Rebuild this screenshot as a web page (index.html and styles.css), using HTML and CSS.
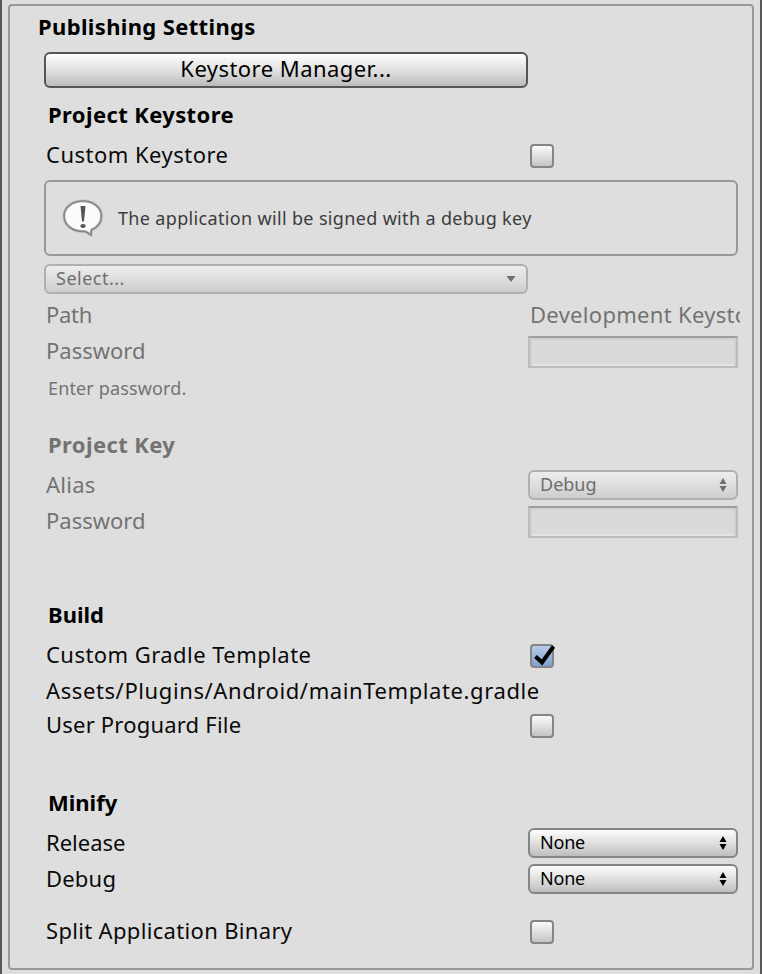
FILE: index.html
```html
<!DOCTYPE html>
<html lang="en">
<head>
<meta charset="utf-8">
<title>Publishing Settings</title>
<link rel="stylesheet" href="styles.css">
</head>
<body>
<main class="window">
  <section class="panel">
    <h1 class="title"><span class="t-publishing">Publishing Settings</span></h1>
    <button class="button"><span class="t-manager">Keystore Manager...</span></button>

    <h2 class="heading"><span class="t-keystore">Project Keystore</span></h2>
    <div class="row first"><span class="label"><span class="t-custom">Custom Keystore</span></span><span class="check"></span></div>
    <div class="help">
      <svg class="bubble" width="42" height="38" viewBox="0 0 42 38">
        <path d="M21 2C31.500 2 39.500 8.500 39.500 17C39.500 24 34.500 28.800 29.500 31L29 36L23.500 32.500C10 33 2 26 2 17C2 8.500 10 2 21 2Z" fill="#fbfbfb" stroke="#c2c2c2" stroke-width="3"/>
        <path d="M21 2C31.500 2 39.500 8.500 39.500 17C39.500 24 34.500 28.800 29.500 31L29 36L23.500 32.500C10 33 2 26 2 17C2 8.500 10 2 21 2Z" fill="none" stroke="#858585" stroke-width="1.500"/>
        <path d="M18.500 7H23.500L22 22.500H20Z" fill="#555"/>
        <ellipse cx="21" cy="27" rx="2.700" ry="2" fill="#555"/>
      </svg>
      <span class="t-help">The application will be signed with a debug key</span>
    </div>
    <div class="dropdown wide off"><span class="t-select">Select...</span><svg width="10" height="6" viewBox="0 0 10 6"><path d="M0.500 0H9.500L5 6Z" fill="currentColor"/></svg></div>
    <div class="row path dim"><span class="label"><span class="t-path">Path</span></span><span class="value"><span class="t-dev">Development Keystore</span></span></div>
    <div class="row field-row dim"><span class="label"><span class="t-password">Password</span></span><span class="field"></span></div>
    <p class="note dim"><span class="t-enter">Enter password.</span></p>

    <h2 class="heading key dim"><span class="t-key">Project Key</span></h2>
    <div class="row first dim"><span class="label"><span class="t-alias">Alias</span></span><span class="dropdown off"><span class="t-debug-s">Debug</span><svg width="8" height="14" viewBox="0 0 8 14"><path d="M4 0L7.500 6H0.500ZM0.500 8H7.500L4 14Z" fill="currentColor"/></svg></span></div>
    <div class="row field-row dim"><span class="label"><span class="t-password">Password</span></span><span class="field"></span></div>

    <h2 class="heading build"><span class="t-build">Build</span></h2>
    <div class="row first"><span class="label"><span class="t-gradle">Custom Gradle Template</span></span><span class="check on"><svg width="26" height="26" viewBox="0 0 26 26"><path d="M5.500 12.500L12 18.500L23.500 2.500" fill="none" stroke="#000" stroke-width="4"/></svg></span></div>
    <div class="row next"><span class="label"><span class="t-assets">Assets/Plugins/Android/mainTemplate.gradle</span></span></div>
    <div class="row close"><span class="label"><span class="t-proguard">User Proguard File</span></span><span class="check"></span></div>

    <h2 class="heading minify"><span class="t-minify">Minify</span></h2>
    <div class="row first"><span class="label"><span class="t-release">Release</span></span><span class="dropdown"><span class="t-none">None</span><svg width="8" height="14" viewBox="0 0 8 14"><path d="M4 0L7.500 6H0.500ZM0.500 8H7.500L4 14Z" fill="currentColor"/></svg></span></div>
    <div class="row next"><span class="label"><span class="t-debug">Debug</span></span><span class="dropdown"><span class="t-none">None</span><svg width="8" height="14" viewBox="0 0 8 14"><path d="M4 0L7.500 6H0.500ZM0.500 8H7.500L4 14Z" fill="currentColor"/></svg></span></div>
    <div class="row split"><span class="label"><span class="t-split">Split Application Binary</span></span><span class="check"></span></div>
  </section>
</main>
</body>
</html>
```
FILE: styles.css
```css
* { box-sizing: border-box; }
body { margin: 0; background: #dedede; }
.window {
  height: 974px;
  padding: 4px 6px;
  border: solid #58585a;
  border-width: 0 2px;
  font: 22px/32px "Noto Sans", "Open Sans", sans-serif;
  color: #0a0a0a;
  white-space: nowrap;
  overflow: hidden;
}
.panel {
  width: 746px;
  height: 966px;
  padding: 5px 14px 0 34px;
  border: 2px solid #999;
  border-radius: 4px;
}
h1, h2, p { margin: 0; font-size: 22px; }
h1, h2 { padding-bottom: 2px; line-height: 30px; color: #000; }
.title { margin-left: -6px; font-weight: 700; }
.button {
  display: block;
  width: 484px;
  height: 36px;
  margin-top: 9px;
  padding: 0 0 4px;
  border: 2px solid #555;
  border-radius: 6px;
  background: linear-gradient(#fff, #e1e1e1 50%, #bcbcbc);
  color: #000;
  font: inherit;
  line-height: 28px;
}
.heading { margin: 11px 0 0 4px; }
.heading.key { margin-top: 25px; }
.heading.build { margin-top: 61px; }
.heading.minify { margin-top: 46px; }
.row { display: grid; grid-template-columns: 484px 210px; align-items: center; height: 32px; }
.label { padding: 0 0 2px 2px; line-height: 30px; }
.row.first { margin-top: 8px; }
.row.path { margin-top: 5px; }
.row.field-row { margin-top: 5px; }
.row.next { margin-top: 4px; }
.row.close { margin-top: 2px; }
.row.split { margin-top: 20px; }
.field-row .label { line-height: 28px; padding-bottom: 4px; }
.dim, h2.dim { color: #737373; }
.check {
  width: 24px;
  height: 24px;
  margin: 2px 0 0 2px;
  border: 2px solid #858585;
  border-radius: 4px;
  background: linear-gradient(#fafafa, #dedede 55%, #c4c4c4);
}
.check.on { background: linear-gradient(#b9cbe6, #7f9fd0); }
.check svg { display: block; margin: -2px; overflow: visible; }
.help {
  display: flex;
  align-items: center;
  gap: 14px;
  width: 694px;
  height: 76px;
  margin-top: 9px;
  padding-left: 16px;
  border: 2px solid #999;
  border-radius: 6px;
  font-size: 18px;
  color: #3c3c3c;
}
.dropdown {
  display: flex;
  align-items: center;
  justify-content: space-between;
  width: 210px;
  height: 30px;
  padding: 0 9px 0 10px;
  border: 2px solid #858585;
  border-radius: 6px;
  background: linear-gradient(#fdfdfd, #dfdfdf 50%, #bebebe);
  color: #000;
  font-size: 18px;
  line-height: 24px;
}
.dropdown span { padding-bottom: 2px; }
.dropdown.wide { width: 484px; margin-top: 8px; padding-right: 10px; }
.dropdown.off { border-color: #b0b0b0; background: linear-gradient(#ededed, #dedede 50%, #cdcdcd); color: #6e6e6e; }
.value { width: 212px; padding: 0 0 2px 2px; line-height: 30px; overflow: hidden; }
.field {
  height: 32px;
  border: 2px solid #bdbdbd;
  border-top-color: #9e9e9e;
  background: #dadada;
  box-shadow: inset 2px 0 #d0d0d0, inset -2px 0 #d0d0d0, inset 0 2px #d2d2d2, inset 0 -2px #e4e4e4;
}
.note { margin: 4px 0 0 4px; font-size: 18px; }

/* Tracking per text */
.t-publishing { letter-spacing: .35px; }
.t-manager { letter-spacing: .45px; }
.t-keystore { letter-spacing: .38px; }
.t-custom { letter-spacing: .48px; }
.t-help { letter-spacing: .34px; }
.t-select { letter-spacing: .5px; }
.t-path { letter-spacing: -.3px; }
.t-dev { letter-spacing: .3px; }
.t-enter { letter-spacing: .14px; }
.t-key { letter-spacing: .38px; }
.t-alias { letter-spacing: .25px; }
.t-gradle { letter-spacing: .45px; }
.t-assets { letter-spacing: .6px; }
.t-proguard { letter-spacing: .2px; }
.t-debug { letter-spacing: .2px; }
.t-none { letter-spacing: -.2px; }
.t-split { letter-spacing: .33px; }
```
